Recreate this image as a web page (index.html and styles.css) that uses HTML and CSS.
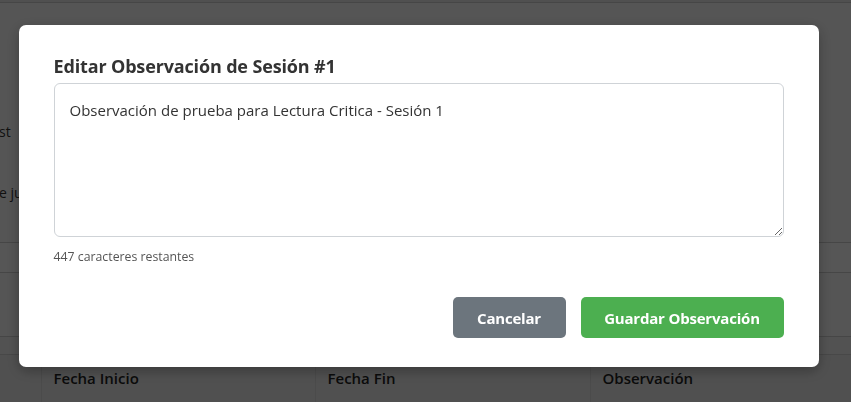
FILE: index.html
```html
<!DOCTYPE html>
<html lang="es">
<head>
<meta charset="utf-8">
<title>Editar Observación</title>
<link rel="stylesheet" href="styles.css">
</head>
<body>
<div class="page">
  <div class="topbar"></div>
  <div class="info">
    <p class="line l1">st</p>
    <p class="line l2">e juicio crítico y análisis</p>
  </div>
  <div class="rows">
    <div class="row r1"></div>
    <div class="row r2"></div>
    <div class="row r3"></div>
  </div>
  <table class="table">
    <thead>
      <tr><th class="c0"></th><th>Fecha Inicio</th><th>Fecha Fin</th><th>Observación</th></tr>
    </thead>
  </table>
</div>
<div class="overlay">
  <div class="modal">
    <h2 class="title">Editar Observación de Sesión #1</h2>
    <textarea class="field">Observación de prueba para Lectura Critica - Sesión 1</textarea>
    <div class="counter">447 caracteres restantes</div>
    <div class="actions">
      <button class="btn btn-cancel">Cancelar</button>
      <button class="btn btn-save">Guardar Observación</button>
    </div>
  </div>
</div>
</body>
</html>
```
FILE: styles.css
```css
* { box-sizing: border-box; }
html, body { margin: 0; height: 100%; overflow: hidden; }
body {
  font-family: "Open Sans", "Noto Sans", "Liberation Sans", sans-serif;
  background: #f4f4f4;
  color: #333;
}
.page { width: 851px; }
.topbar { height: 3px; background: #e6e6e6; border-bottom: 1px solid #c8c8c8; }
.info { padding-top: 120px; height: 239px; }
.line { margin: 0; font-size: 14px; color: #333; white-space: nowrap; line-height: 18px; }
.l1 { margin-left: -1px; }
.l2 { margin-top: 43px; margin-left: -1px; }
.row { border-top: 1px solid #c9c9c9; }
.r1 { height: 30px; background: #f7f7f7; }
.r2 { height: 64px; background: #f2f2f2; }
.r3 { height: 18px; background: #ececec; }
.table { border-collapse: collapse; width: 851px; background: #e6e6e6; border-top: 1px solid #cdcdcd; }
.table th {
  text-align: left; font-weight: 600; font-size: 15px; color: #222;
  height: 47px; padding: 0 12px; border-left: 1px solid #d6d6d6;
  vertical-align: middle;
}
.table th.c0 { width: 41px; border-left: 0; padding: 0; }
.table th:nth-child(2) { width: 274px; }
.table th:nth-child(3) { width: 275px; }

.overlay {
  position: fixed; inset: 0;
  background: rgba(0, 0, 0, 0.65);
  display: flex; align-items: flex-start; justify-content: center;
  padding-top: 25px;
}
.modal {
  width: 800px; height: 342px;
  background: #fff; border-radius: 7px;
  padding: 29px 35px 29px;
  display: flex; flex-direction: column;
  box-shadow: 0 4px 14px rgba(0,0,0,0.3);
  margin-left: -14px;
}
.title {
  margin: 0 0 4px; font-size: 18px; font-weight: 700; color: #333;
  line-height: 25px; letter-spacing: -0.15px;
}
.field {
  display: block; width: 730px; height: 154px;
  border: 1px solid #cfd3d7; border-radius: 6px;
  padding: 15px 15px;
  font-family: inherit; font-size: 15px; color: #333; line-height: 22px;
  resize: vertical; outline: none;
}
.counter { margin-top: 11px; font-size: 12.3px; color: #555; line-height: 17px; }
.actions {
  margin-top: auto; display: flex; justify-content: flex-end; gap: 15px;
}
.btn {
  height: 41px; border: 0; border-radius: 5px; color: #fff;
  font-family: inherit; font-size: 15px; font-weight: 700; padding: 0;
  white-space: nowrap; letter-spacing: -0.2px;
}
.btn-cancel { background: #6c757d; width: 113px; }
.btn-save { background: #4caf50; width: 203px; }
```
